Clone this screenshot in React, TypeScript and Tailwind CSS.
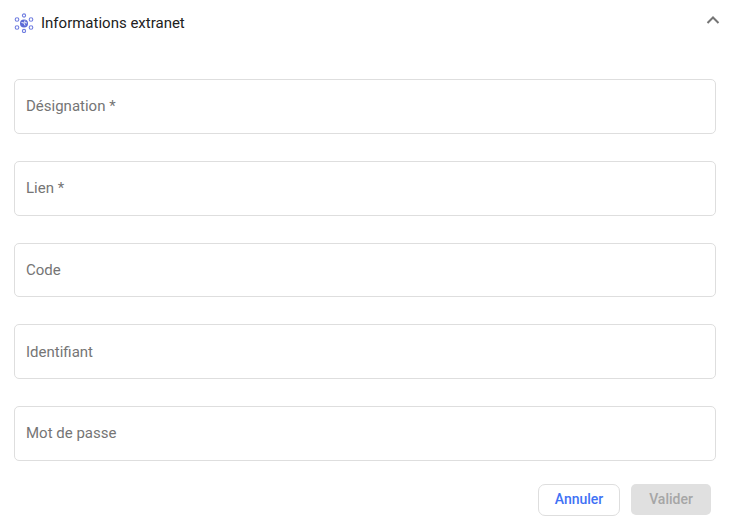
import React from "react";

const fields = ["Désignation *", "Lien *", "Code", "Identifiant", "Mot de passe"];

const NetworkIcon = () => (
  <svg width="20" height="20" viewBox="0 0 20 20" fill="none" stroke="#6f7de0" strokeWidth="1.100">
    <circle cx="10" cy="10.500" r="4" fill="#5c6bd6" stroke="none" />
    <path d="M7.500 9.500l2.500 .5 1 2.500M11 7.500l-.5 2 2.500 .5" stroke="#ffffff" strokeWidth="0.9" />
    <circle cx="10" cy="2.500" r="1.600" />
    <circle cx="10" cy="18" r="1.600" />
    <circle cx="3" cy="6.500" r="1.800" />
    <circle cx="17" cy="6.500" r="1.800" />
    <circle cx="3" cy="14.500" r="1.800" />
    <circle cx="17" cy="14.500" r="1.800" />
  </svg>
);

const Field = ({ label }: { label: string }) => (
  <div className="h-[54.75px] rounded-[5px] border border-[#dedede] bg-white flex items-center px-[11px] text-[15px] text-[#757575]">
    {label}
  </div>
);

export default function App() {
  return (
    <div className="w-[736px] h-[524px] bg-white overflow-hidden font-['Roboto',sans-serif]">
      <div className="h-[46px] flex items-center justify-between pl-[14px] pr-[15px]">
        <div className="flex items-center gap-[7px]">
          <NetworkIcon />
          <span className="text-[15px] text-[#212121]">Informations extranet</span>
        </div>
        <svg width="16" height="16" viewBox="0 0 16 16" fill="none" stroke="#757575" strokeWidth="2" className="mb-[6px]">
          <path d="M2.500 11L8 5.500l5.500 5.500" />
        </svg>
      </div>
      <div className="mt-[33.2px] ml-[14px] w-[702px] flex flex-col gap-[27px]">
        {fields.map((f) => (
          <Field key={f} label={f} />
        ))}
      </div>
      <div className="mt-[22.8px] mr-[25px] flex justify-end items-center gap-[11px]">
        <button className="w-[82px] h-[32px] rounded-[7px] border border-[#dedede] bg-white text-[14px] font-medium text-[#3f72f5]">
          Annuler
        </button>
        <button className="w-[80px] h-[31px] rounded-[5px] bg-[#e0e0e0] text-[14px] font-medium text-[#a6a6a6]">
          Valider
        </button>
      </div>
    </div>
  );
}
